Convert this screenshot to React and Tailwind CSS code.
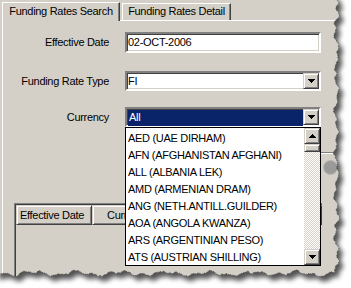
import React from "react";

function Arrow({ up = false }) {
  return (
    <svg width="7" height="4" viewBox="0 0 7 4" shapeRendering="crispEdges">
      {up ? (
        <g fill="#000">
          <rect x="3" y="0" width="1" height="1" />
          <rect x="2" y="1" width="3" height="1" />
          <rect x="1" y="2" width="5" height="1" />
          <rect x="0" y="3" width="7" height="1" />
        </g>
      ) : (
        <g fill="#000">
          <rect x="0" y="0" width="7" height="1" />
          <rect x="1" y="1" width="5" height="1" />
          <rect x="2" y="2" width="3" height="1" />
          <rect x="3" y="3" width="1" height="1" />
        </g>
      )}
    </svg>
  );
}

function Btn3D({ children, className = "" }) {
  return (
    <div
      className={`flex items-center justify-center bg-[#d4d0c8] border border-t-[#d4d0c8] border-l-[#d4d0c8] border-r-[#404040] border-b-[#404040] shadow-[inset_1px_1px_#ffffff,inset_-1px_-1px_#808080] ${className}`}
    >
      {children}
    </div>
  );
}

const sunken =
  "border-2 border-t-[#808080] border-l-[#808080] border-r-white border-b-white";
const sunkenInner = "shadow-[inset_1px_1px_#404040,inset_-1px_-1px_#d4d0c8]";

function TornEdge() {
  let s = 12345;
  const r = () => {
    s = (s * 16807) % 2147483647;
    return (s - 1) / 2147483646;
  };
  const pts = [];
  for (let y = 0; y <= 270; y += 2) {
    const x = 336.5 + 1.6 * Math.sin(y / 6.5) + 1.2 * Math.sin(y / 2.3 + 1) + (r() * 2 - 1);
    pts.push([x, y]);
  }
  pts.push([335, 273]);
  for (let x = 332; x >= -2; x -= 2) {
    const y = 273.5 + 1.6 * Math.sin(x / 7) + 1.2 * Math.sin(x / 2.7 + 2) + (r() * 2 - 1);
    pts.push([x, y]);
  }
  const edge = pts.map((p) => `${p[0].toFixed(1)},${p[1].toFixed(1)}`).join(" L");
  const paper = `M-5,-5 L${pts[0][0].toFixed(1)},-5 L${edge} L-5,${pts[pts.length - 1][1].toFixed(1)} Z`;
  return (
    <svg
      className="absolute left-0 top-0 pointer-events-none"
      width="351"
      height="288"
      viewBox="0 0 351 288"
    >
      <defs>
        <filter id="blur" x="-20%" y="-20%" width="140%" height="140%">
          <feGaussianBlur stdDeviation="2.6" />
        </filter>
        <mask id="outside">
          <rect x="0" y="0" width="351" height="288" fill="#fff" />
          <path d={paper} fill="#000" />
        </mask>
      </defs>
      <g mask="url(#outside)">
        <rect x="0" y="0" width="351" height="288" fill="#fff" />
        <path d={paper} transform="translate(4,5)" fill="#000" opacity="0.68" filter="url(#blur)" />
      </g>
      <path d={`M${edge}`} fill="none" stroke="#555" strokeWidth="0.9" strokeDasharray="1 1" />
    </svg>
  );
}

const currencies = [
  "AED (UAE DIRHAM)",
  "AFN (AFGHANISTAN AFGHANI)",
  "ALL (ALBANIA LEK)",
  "AMD (ARMENIAN DRAM)",
  "ANG (NETH.ANTILL.GUILDER)",
  "AOA (ANGOLA KWANZA)",
  "ARS (ARGENTINIAN PESO)",
  "ATS (AUSTRIAN SHILLING)",
];

function FormRow({ label, children, className = "" }) {
  return (
    <div className={`flex items-center ${className}`}>
      <div className="w-[106px] text-right leading-none">{label}</div>
      <div className="ml-[16px] w-[196px] relative">{children}</div>
    </div>
  );
}

export default function App() {
  return (
    <div className="relative w-[351px] h-[288px] overflow-hidden bg-[#d4d0c8] text-[11px] tracking-[-0.3px] text-black font-['Liberation_Sans',Arial,sans-serif]">
      <div className="flex flex-col h-full pl-[2px]">
        {/* Tabs */}
        <div className="flex h-[21px] items-end shrink-0">
          <div className="h-[19px] w-[118px] flex items-center justify-center border-t border-l border-r border-t-white border-l-white border-r-[#404040] shadow-[inset_-1px_0_#808080] pb-[2px]">
            Funding Rates Search
          </div>
          <div className="flex-1 h-full flex items-end border-b border-white pl-[2px]">
            <div className="h-[17px] w-[109px] flex items-center justify-center border-t border-l border-r border-t-white border-l-white border-r-[#404040] shadow-[inset_-1px_0_#808080] pb-[1px]">
              Funding Rates Detail
            </div>
          </div>
        </div>

        {/* Panel */}
        <div className="flex-1 border-l border-white flex flex-col">
          <FormRow label="Effective Date" className="mt-[11px]">
            <div className={`h-[21px] bg-white ${sunken} ${sunkenInner} flex items-center pl-[1px]`}>
              02-OCT-2006
            </div>
          </FormRow>

          <FormRow label="Funding Rate Type" className="mt-[18px]">
            <div className={`h-[20px] bg-white ${sunken} ${sunkenInner} flex items-center`}>
              <div className="flex-1 pl-[1px]">FI</div>
              <Btn3D className="w-[16px] h-[16px]">
                <Arrow />
              </Btn3D>
            </div>
          </FormRow>

          <FormRow label="Currency" className="mt-[16px]">
            <div className={`h-[20px] bg-white ${sunken} ${sunkenInner} flex items-center`}>
              <div className="flex-1 h-full bg-[#0a246a] text-white pl-[1px] flex items-center ml-[1px] mt-[1px]">
                All
              </div>
              <Btn3D className="w-[16px] h-[16px]">
                <Arrow />
              </Btn3D>
            </div>
            {/* dropdown list */}
            <div className="absolute left-0 top-full z-10 w-[196px] h-[139px] bg-white border border-black flex">
              <div className="flex-1 flex flex-col">
                {currencies.map((c) => (
                  <div key={c} className="h-[17px] pl-[2px] pt-[3px] leading-[14px] whitespace-nowrap">
                    {c}
                  </div>
                ))}
              </div>
              <div className="w-[16px] flex flex-col">
                <Btn3D className="w-[16px] h-[16px] shrink-0">
                  <Arrow up />
                </Btn3D>
                <Btn3D className="w-[16px] h-[8px] shrink-0" />
                <div className="flex-1 bg-[repeating-conic-gradient(#d4d0c8_0_25%,#ffffff_0_50%)] bg-[length:2px_2px]" />
                <Btn3D className="w-[16px] h-[16px] shrink-0">
                  <Arrow />
                </Btn3D>
              </div>
            </div>
          </FormRow>

          {/* separator + round button */}
          <div className="mt-[25px] ml-[200px] h-[2px] border-t border-b border-t-[#808080] border-b-white" />
          <div className="mt-[6px] pl-[320px] h-[15px]">
            <div className="w-[15px] h-[15px] rounded-full bg-[#9a9a9a] border border-[#b8b6b0]" />
          </div>

          {/* table */}
          <div className="mt-[28px] ml-[11px] w-[308px] flex-1 border-t border-l border-t-[#808080] border-l-[#808080] shadow-[inset_1px_1px_#404040] pl-[1px] pt-[1px]">
            <div className="flex h-[20px]">
              <Btn3D className="w-[76px] h-[20px] shrink-0 justify-start pl-[3px]">Effective Date</Btn3D>
              <Btn3D className="w-[80px] h-[20px] shrink-0 justify-start pl-[14px]">Curr</Btn3D>
              <Btn3D className="flex-1 h-[20px]" />
            </div>
          </div>
        </div>
      </div>
      <TornEdge />
    </div>
  );
}
